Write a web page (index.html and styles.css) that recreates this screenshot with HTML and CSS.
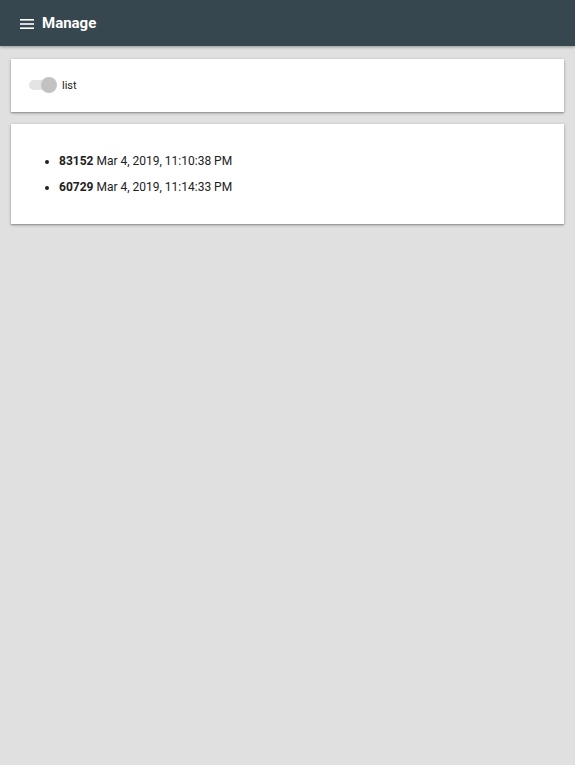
FILE: index.html
```html
<!DOCTYPE html>
<html>
<head>
<meta charset="utf-8">
<link rel="stylesheet" href="styles.css">
</head>
<body>
<header class="bar">
  <svg class="menu" width="14" height="10" viewBox="0 0 14 10"><rect x="0" y="0" width="14" height="1.6" fill="#fff"/><rect x="0" y="4.2" width="14" height="1.6" fill="#fff"/><rect x="0" y="8.4" width="14" height="1.6" fill="#fff"/></svg>
  <h1 class="title">Manage</h1>
</header>
<main class="content">
  <section class="card toggle-card">
    <label class="switch">
      <span class="track"></span>
      <span class="thumb"></span>
    </label>
    <span class="switch-label">list</span>
  </section>
  <section class="card list-card">
    <ul class="items">
      <li><b>83152</b> Mar 4, 2019, 11:10:38 PM</li>
      <li><b>60729</b> Mar 4, 2019, 11:14:33 PM</li>
    </ul>
  </section>
</main>
</body>
</html>
```
FILE: styles.css
```css
html, body {
  margin: 0;
  padding: 0;
  background: #e0e0e0;
  font-family: Roboto, "Liberation Sans", sans-serif;
  color: #212121;
  height: 100%;
}
.bar {
  height: 46px;
  background: #37474f;
  display: flex;
  align-items: center;
  padding-left: 20px;
  box-shadow: 0 1px 3px rgba(0,0,0,0.35);
  position: relative;
  z-index: 1;
}
.menu {
  display: block;
  margin-top: 1px;
}
.title {
  margin: 0 0 0 8px;
  font-size: 15px;
  font-weight: 700;
  color: #fff;
  letter-spacing: 0;
}
.content {
  padding: 13px 11px;
  display: flex;
  flex-direction: column;
  gap: 12px;
}
.card {
  background: #fff;
  box-shadow: 0 1px 3px rgba(0,0,0,0.3), 0 1px 1px rgba(0,0,0,0.14);
}
.toggle-card {
  height: 53px;
  display: flex;
  align-items: center;
  padding-left: 18px;
  padding-bottom: 1px;
  box-sizing: border-box;
}
.switch {
  position: relative;
  width: 28px;
  height: 16px;
  display: block;
}
.track {
  position: absolute;
  left: 0;
  top: 3px;
  width: 26px;
  height: 10px;
  border-radius: 5px;
  background: #e4e4e4;
}
.thumb {
  position: absolute;
  left: 12px;
  top: 0;
  width: 16px;
  height: 16px;
  border-radius: 50%;
  background: #c2c2c2;
}
.switch-label {
  margin-left: 5px;
  font-size: 11px;
  color: #222;
}
.list-card {
  height: 100px;
  box-sizing: border-box;
  padding-top: 24px;
}
.items {
  margin: 0;
  padding-left: 48px;
  font-size: 12px;
  line-height: 26px;
}
.items b {
  font-weight: 700;
}
```
